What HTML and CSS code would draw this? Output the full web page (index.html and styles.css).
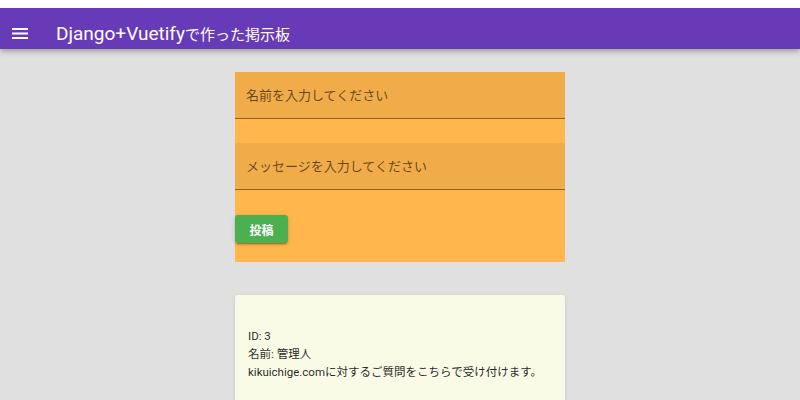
FILE: index.html
```html
<!DOCTYPE html>
<html lang="ja">
<head>
  <meta charset="UTF-8">
  <meta name="viewport" content="width=device-width, initial-scale=1.0">
  <title>Django+Vuetifyで作った掲示板</title>
  <link rel="stylesheet" href="styles.css">
</head>
<body>
  <div class="top-strip"></div>
  <header class="toolbar">
    <button class="nav-icon" aria-label="menu">
      <svg width="16" height="11" viewBox="0 0 16 11">
        <rect x="0" y="0" width="16" height="2" fill="#fff"/>
        <rect x="0" y="4.5" width="16" height="2" fill="#fff"/>
        <rect x="0" y="9" width="16" height="2" fill="#fff"/>
      </svg>
    </button>
    <div class="toolbar-title">Django+Vuetify<span class="ja">で作った掲示板</span></div>
  </header>

  <main class="content">
    <form class="post-form">
      <div class="field">
        <input type="text" placeholder="名前を入力してください">
      </div>
      <div class="field">
        <input type="text" placeholder="メッセージを入力してください">
      </div>
      <button type="button" class="submit">投稿</button>
    </form>

    <div class="card">
      <p>ID: 3</p>
      <p>名前: 管理人</p>
      <p>kikuichige.comに対するご質問をこちらで受け付けます。</p>
    </div>
  </main>
</body>
</html>
```

FILE: styles.css
```css
* {
  box-sizing: border-box;
  margin: 0;
  padding: 0;
}

body {
  background: #e0e0e0;
  font-family: Roboto, "Noto Sans CJK JP", sans-serif;
  color: rgba(0, 0, 0, 0.87);
  overflow: hidden;
}

.top-strip {
  height: 8px;
  background: #fff;
}

.toolbar {
  height: 41px;
  background: #673ab7;
  display: flex;
  align-items: center;
  padding: 9px 0 0 12px;
  box-shadow: 0 2px 4px -1px rgba(0, 0, 0, 0.2), 0 4px 5px 0 rgba(0, 0, 0, 0.14);
  position: relative;
  z-index: 2;
}

.nav-icon {
  background: none;
  border: none;
  width: 16px;
  height: 11px;
  display: flex;
}

.toolbar-title {
  margin-left: 28px;
  color: #fff;
  font-size: 19px;
  font-weight: 400;
  white-space: nowrap;
}

.toolbar-title .ja {
  font-size: 15px;
}

.content {
  width: 330px;
  margin: 23px auto 0;
}

.post-form {
  background: #ffb74d;
  height: 190px;
  display: flex;
  flex-direction: column;
}

.field {
  height: 47px;
  background: rgba(0, 0, 0, 0.06);
  border-bottom: 1px solid rgba(0, 0, 0, 0.42);
  margin-bottom: 24px;
  display: flex;
  align-items: center;
}

.field input {
  width: 100%;
  height: 100%;
  border: none;
  background: transparent;
  padding: 0 11px;
  font-family: Roboto, "Noto Sans CJK JP", sans-serif;
  font-size: 13px;
  outline: none;
}

.field input::placeholder {
  color: rgba(0, 0, 0, 0.6);
}

.submit {
  align-self: flex-start;
  margin-top: 1px;
  width: 53px;
  height: 28px;
  background: #4caf50;
  color: #fff;
  border: none;
  border-radius: 3px;
  font-family: Roboto, "Noto Sans CJK JP", sans-serif;
  font-size: 12px;
  font-weight: 700;
  box-shadow: 0 3px 1px -2px rgba(0, 0, 0, 0.2), 0 2px 2px 0 rgba(0, 0, 0, 0.14), 0 1px 5px 0 rgba(0, 0, 0, 0.12);
}

.card {
  margin-top: 33px;
  background: #f9fbe7;
  border-radius: 3px;
  padding: 32px 13px 20px;
  box-shadow: 0 1px 3px rgba(0, 0, 0, 0.15);
  font-size: 11.5px;
  line-height: 18px;
  height: 140px;
}
```
